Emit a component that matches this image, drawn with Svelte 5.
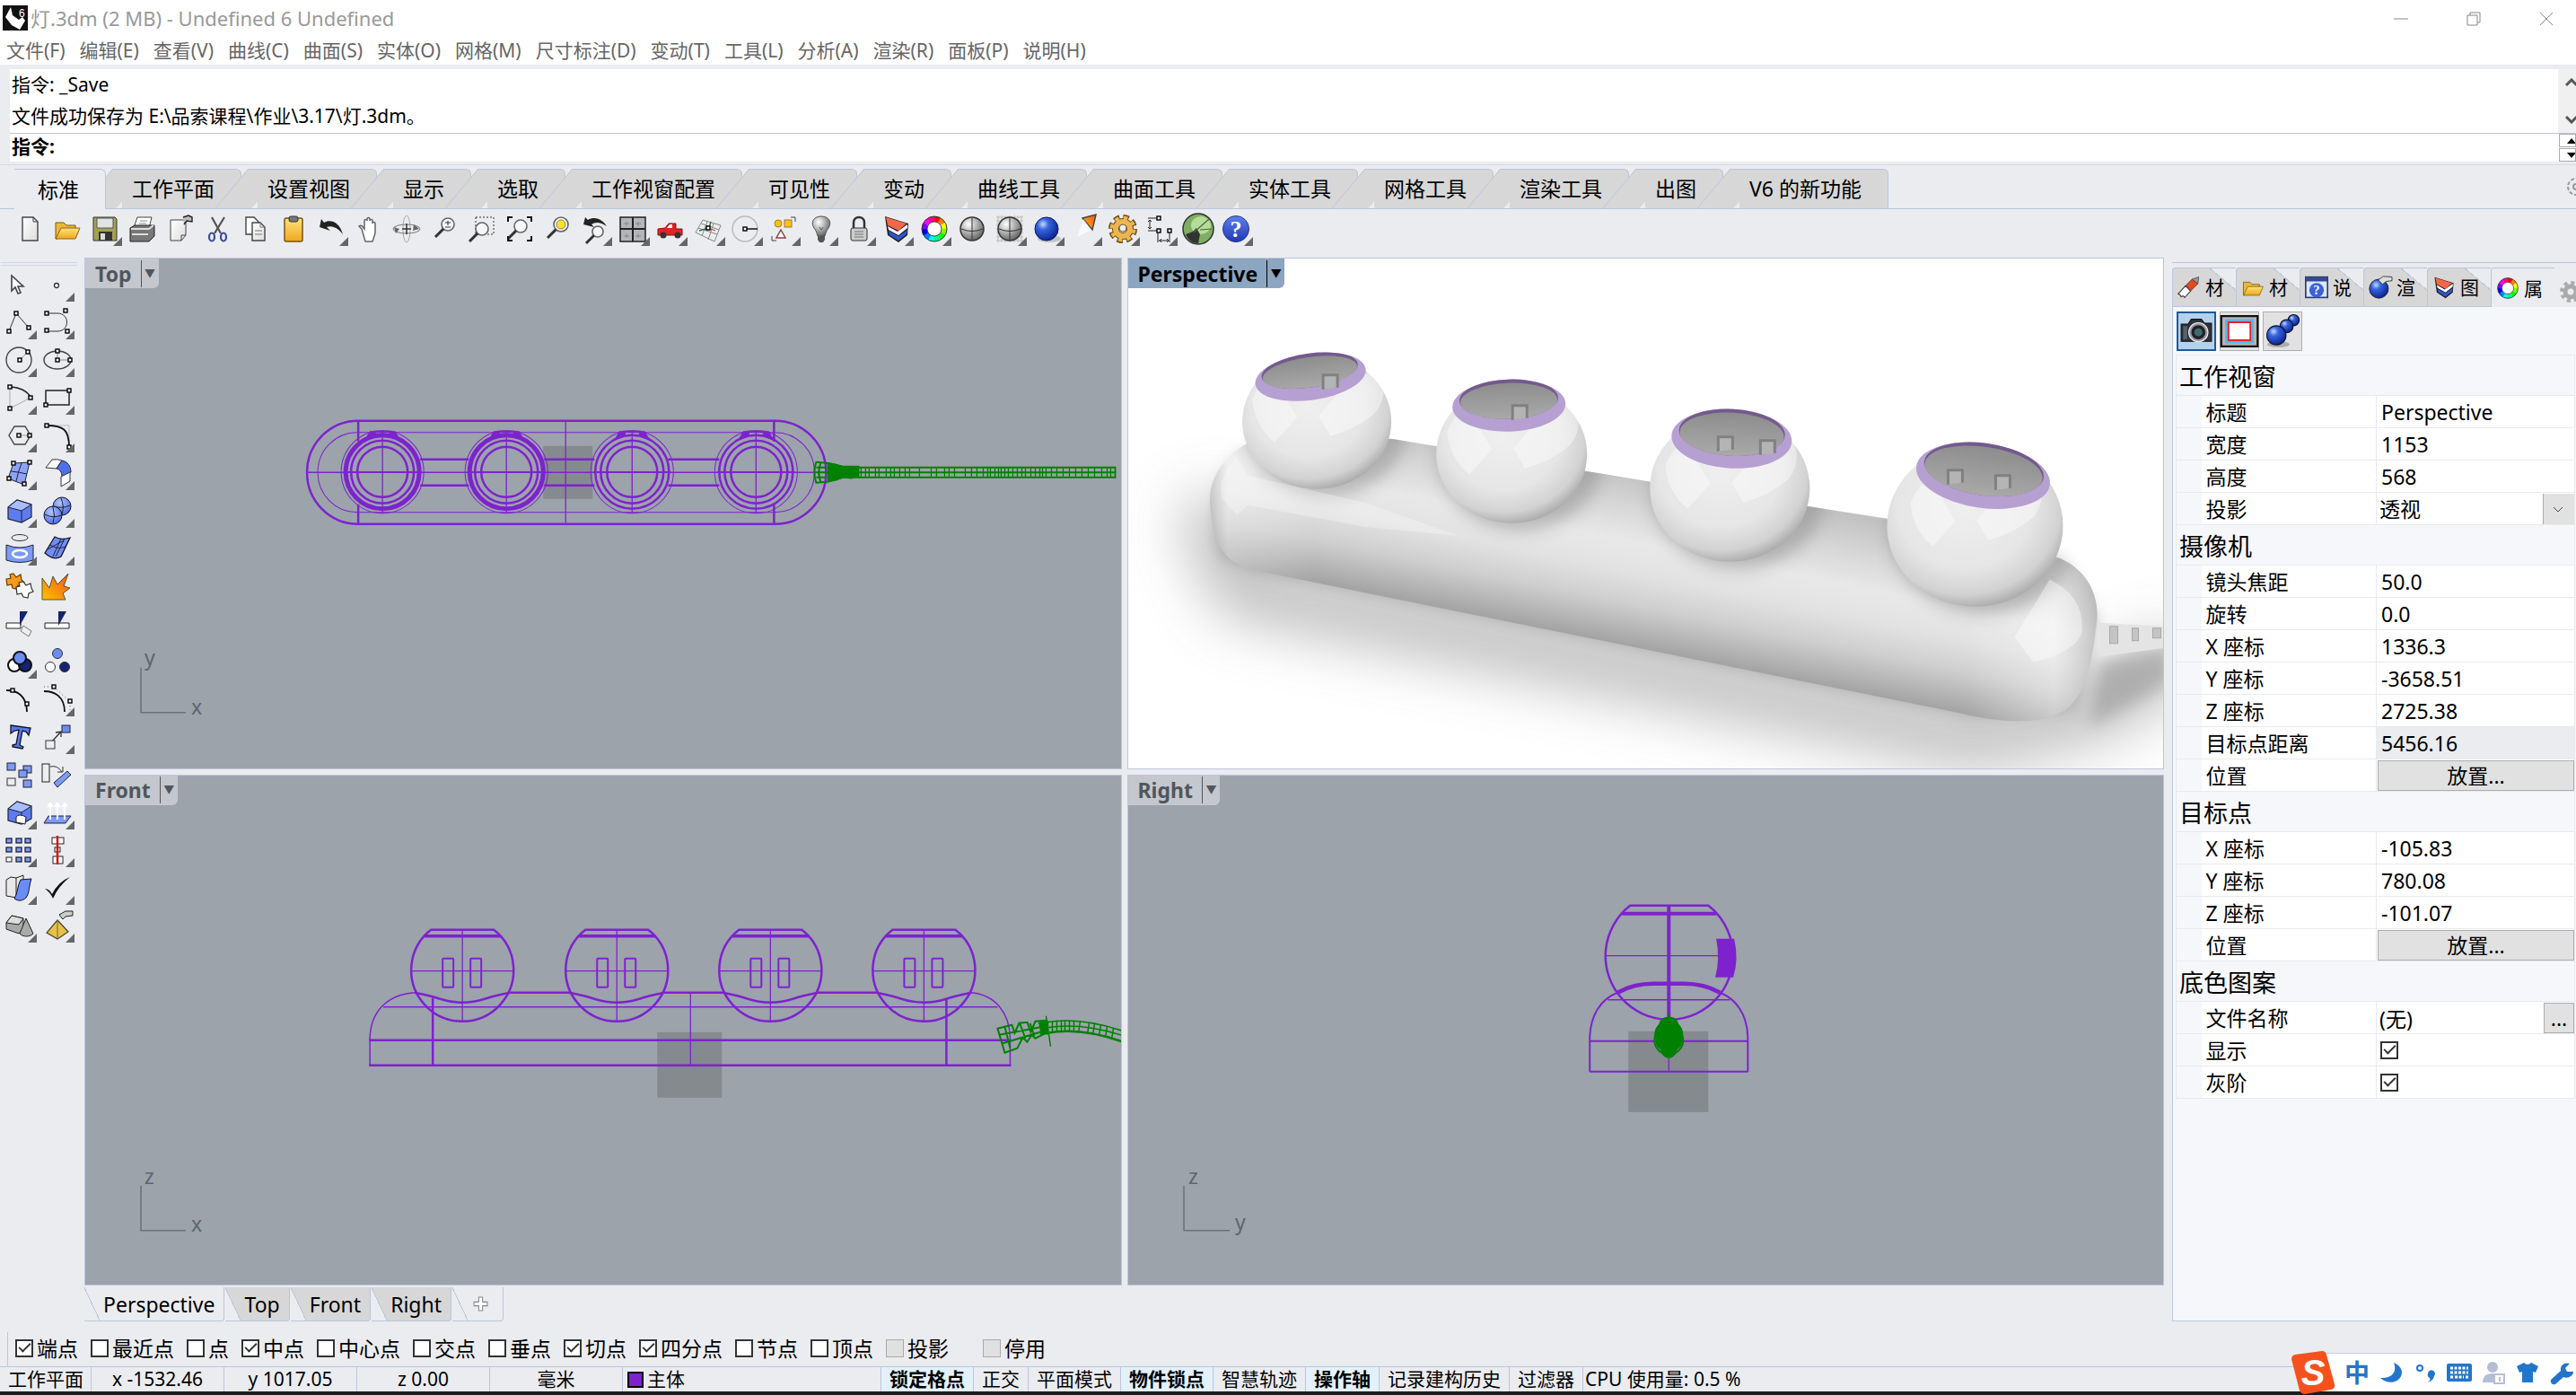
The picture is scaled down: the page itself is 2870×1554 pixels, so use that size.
<script>
  const menus = ['文件(F)', '编辑(E)', '查看(V)', '曲线(C)', '曲面(S)', '实体(O)', '网格(M)', '尺寸标注(D)', '变动(T)', '工具(L)', '分析(A)', '渲染(R)', '面板(P)', '说明(H)'];
  const tabs = ['标准', '工作平面', '设置视图', '显示', '选取', '工作视窗配置', '可见性', '变动', '曲线工具', '曲面工具', '实体工具', '网格工具', '渲染工具', '出图', 'V6 的新功能'];
  const viewTabs = ['Perspective', 'Top', 'Front', 'Right'];

  let activeTab = '标准';
  let activeView = 'Perspective';

  // control point handle
  const pt = (x, y) => `<rect x="${x - 2}" y="${y - 2}" width="4" height="4" fill="#fff" stroke="#000" stroke-width="1.4"/>`;

  const wheel = Array.from({ length: 12 }, (_, i) => {
    const a = (i * Math.PI) / 6 - 0.02;
    const b = a + Math.PI / 6 + 0.04;
    const p = (t) => `${(16 + 11 * Math.sin(t)).toFixed(2)} ${(16 - 11 * Math.cos(t)).toFixed(2)}`;
    return `<path d="M${p(a)}A11 11 0 0 1 ${p(b)}" fill="none" stroke="hsl(${i * 30},100%,50%)" stroke-width="6"/>`;
  }).join('') + '<circle cx="16" cy="16" r="14" fill="none" stroke="#333"/><circle cx="16" cy="16" r="8" fill="#fff" stroke="#444"/>';

  const lens = (x, y, r) => `<circle cx="${x}" cy="${y}" r="${r}" fill="#f6f6f8" stroke="#666" stroke-width="1.6"/><path d="M${x - r * 0.7} ${y + r * 0.7}L${x - r - 7} ${y + r + 7}" stroke="#333" stroke-width="3"/>`;
  const folder = '<path d="M3 9h9l3 3h10v4H9L5 27H3z" fill="#e9b93c" stroke="#7a5a10"/><path d="M3 27L9 15h21l-5 12z" fill="url(#yellow)" stroke="#8a6510"/>';
  const page = '<path d="M8 3h12l5 5v21H8z" fill="url(#paper)" stroke="#444" stroke-width="1.4"/><path d="M20 3v5h5" fill="none" stroke="#444"/>';
  const layers = '<path d="M3 2l16 5 10 3-1 13-10 8L6 23z" fill="#1c1c24"/><path d="M4 3l23 7-9 8L6 12z" fill="#f2674a"/><path d="M6 13l11 6 11-8v4l-10 8-11-6z" fill="#fff"/><path d="M7 18l11 6 10-7-1 5-9 7-10-6z" fill="#2f55c8"/>';
  const sphere = '<circle cx="16" cy="16" r="13" fill="url(#grey)" stroke="#333" stroke-width="1.5"/><path d="M16 4v24M4 16q12 5 24 0" stroke="#333" fill="none"/>';
  const ball = '<ellipse cx="18" cy="27" rx="13" ry="4" fill="#999" opacity=".5"/><circle cx="15" cy="16" r="13" fill="url(#blue)" stroke="#071a66"/>';
  const box = '<path d="M3 12l10-8 16 5v14l-11 6-15-4z" fill="#5c7cf0" stroke="#223" stroke-width="1.2"/><path d="M3 12l10-8 16 5-11 7z" fill="#a8bcff" stroke="#223"/><path d="M18 16v13" stroke="#223"/>';

  const toolbar = [
    [page],
    [folder],
    ['<path d="M3 3h24l2 2v24H3z" fill="#a3a152" stroke="#333"/><path d="M7 4h18v11H7z" fill="#dfe3e6" stroke="#555"/><path d="M9 19h15v10H9z" fill="#333"/><path d="M11 21h5v7h-5z" fill="#ddd"/>', 1],
    ['<path d="M10 3h16l-3 12H6z" fill="#fff" stroke="#444"/><path d="M2 15l5-3h22v12l-6 6H2z" fill="#777" stroke="#222"/><path d="M3 16h20l5-4M4 22h18" stroke="#ddd" fill="none" stroke-width="2"/><path d="M13 7h8M12 10h8" stroke="#888"/>'],
    ['<path d="M5 6h17v17l-5 6H5z" fill="url(#paper)" stroke="#444"/><path d="M22 23h-5v6" fill="none" stroke="#444"/><path d="M19 3l6-2 4 2v5l-6-1-3 4" fill="#bbb" stroke="#222" stroke-width="1.4"/>'],
    ['<path d="M9 3l10 18M23 3L12 21" stroke="#555" stroke-width="2.2"/><ellipse cx="9" cy="25" rx="3" ry="4.5" fill="none" stroke="#3a4a9a" stroke-width="2.2"/><ellipse cx="22" cy="25" rx="3" ry="4.5" fill="none" stroke="#3a4a9a" stroke-width="2.2"/>'],
    ['<path d="M5 3h9l5 5v14H5z" fill="#fff" stroke="#444" stroke-width="1.4"/><path d="M12 9h9l5 5v15H12z" fill="url(#paper)" stroke="#444" stroke-width="1.4"/><path d="M21 9v5h5M15 18h8M15 22h8" fill="none" stroke="#777"/>'],
    ['<rect x="6" y="4" width="20" height="26" rx="2" fill="url(#yellow)" stroke="#7a5410" stroke-width="1.5"/><rect x="11" y="2" width="10" height="6" rx="2" fill="#777" stroke="#333"/>'],
    ['<path d="M3 14l2-9 3 4C15 5 25 8 29 22 23 14 16 12 11 14l4 4z" fill="#222"/>', 1],
    ['<path d="M8 16L5 13c2-2 4 0 6 3V7c0-2 3-2 3 0V5c0-2 3-2 3 0v2c0-2 3-2 3 0v3c0-2 3-2 3 0v11l-3 9h-8z" fill="#fff" stroke="#666" stroke-width="1.5"/>'],
    ['<ellipse cx="16" cy="16" rx="4" ry="15" fill="none" stroke="#aaa"/><ellipse cx="16" cy="16" rx="15" ry="5" fill="none" stroke="#777"/><path d="M2 14l6 2-4 5M24 11l6 5-7 2" fill="#666"/><path d="M16 10v12M11 16h10" stroke="#333" stroke-width="1.5"/>'],
    [lens(20, 11, 7) + '<path d="M17 9h6M20 7v5M17 14h6" stroke="#333"/>'],
    ['<rect x="9" y="3" width="20" height="19" fill="none" stroke="#333" stroke-dasharray="2 2"/>' + lens(16, 16, 7)],
    [lens(17, 13, 7) + '<path d="M3 8V3h5M24 3h5v5M3 24v5h5M24 29h5v-5" fill="none" stroke="#111" stroke-width="2"/>'],
    [lens(20, 11, 8) + '<circle cx="20" cy="11" r="5" fill="#ffe020" stroke="#886"/>'],
    ['<path d="M3 11l2-8 3 3c8-5 17 0 21 7-7-5-13-5-17-2l3 3z" fill="#222"/>' + lens(19, 19, 6), 1],
    ['<rect x="2" y="3" width="28" height="27" fill="#b4b6ba" stroke="#222" stroke-width="1.5"/><path d="M16 3v27M2 16h28" stroke="#222" stroke-width="2"/><path d="M9 8v5M6 10h6M22 8v5M19 10h6M9 21v5M6 24h6M22 21v5M19 24h6" stroke="#888"/>', 1],
    ['<path d="M2 16l8-1 4-5h8v6h7v7H2z" fill="#e32222" stroke="#8a1010"/><path d="M12 15l3-4h3v4z" fill="#fff"/><circle cx="8" cy="23" r="3.5" fill="#333"/><circle cx="24" cy="23" r="3.5" fill="#333"/>', 1],
    ['<path d="M2 20l8-14 20 6-7 18zM5 15l21 7M8 10l20 7M15 8L9 24M22 10l-6 18" fill="none" stroke="#888"/><path d="M6 18l11-3 2-7" fill="none" stroke="#2a7a30" stroke-width="1.5"/><path d="M16 15l8 3" stroke="#c33"/>' + pt(16, 15), 1],
    ['<circle cx="15" cy="16" r="14" fill="none" stroke="#bbb" stroke-width="1.5"/><path d="M16 16h13" stroke="#111" stroke-width="1.5"/>' + pt(15, 16), 1],
    ['<path d="M3 24v5h5M24 3h5v5" fill="none" stroke="#444"/><circle cx="10" cy="10" r="4" fill="#ffc400" stroke="#975"/><rect x="17" y="6" width="8" height="8" fill="#ffc400" stroke="#975"/><path d="M13 17l5 9H8z" fill="#fff" stroke="#844" stroke-width="1.5"/>', 1],
    ['<path d="M16 2c9 0 12 7 8 13-3 4-3 6-4 9h-8c-1-3-1-5-4-9-4-6-1-13 8-13z" fill="url(#grey)" stroke="#555"/><path d="M12 24h8v4l-2 3h-4l-2-3z" fill="#555"/><path d="M14 14l2 3 2-3" stroke="#555" fill="none"/>', 1],
    ['<path d="M10 15V9c0-8 12-8 12 0v6" fill="none" stroke="#333" stroke-width="2.5"/><rect x="7" y="15" width="18" height="14" rx="2" fill="#ccc" stroke="#333"/><path d="M11 19h10M11 22h10M11 25h10" stroke="#777"/>', 1],
    [layers, 1],
    [wheel, 1],
    [sphere],
    ['<path d="M3 1v30M7 1v30M11 1v30M16 1v30M21 1v30M25 1v30M29 1v30M1 3h30M1 7h30M1 12h30M1 16h30M1 20h30M1 25h30M1 29h30" stroke="#bbb"/>' + sphere, 1],
    [ball, 1],
    ['<path d="M13 4l15-4-4 17z" fill="url(#orange)" stroke="#444" stroke-width="1.5"/><path d="M14 5l9 12-16 8z" fill="#fff" opacity=".7"/>', 1],
    ['<circle cx="16" cy="16" r="8" fill="none" stroke="#6b4a12" stroke-width="8"/><circle cx="16" cy="16" r="13" fill="none" stroke="#6b4a12" stroke-width="6" stroke-dasharray="6.2 4.01"/><circle cx="16" cy="16" r="8" fill="none" stroke="#ecb552" stroke-width="6"/><circle cx="16" cy="16" r="12" fill="none" stroke="#ecb552" stroke-width="5" stroke-dasharray="4.2 5.22" stroke-dashoffset="-.6"/><circle cx="16" cy="15" r="4" fill="#eee" stroke="#664"/>', 1],
    ['<path d="M2 4h10M2 18h10M4 6v10M2 8l2-2 2 2M2 14l2 2 2-2M13 20v11M26 20v11M14 29h11M17 27l-2 2 2 2M23 27l2 2-2 2" fill="none" stroke="#222"/>' + pt(14, 4) + pt(14, 18) + pt(26, 18), 1],
    ['<circle cx="16" cy="16" r="17" fill="#7fae62" stroke="#333" stroke-width="1.5"/><ellipse cx="19" cy="12" rx="11" ry="10" fill="#b5dc98"/><path d="M2 22l8-3 4-4 4 7-2 10C10 32 5 29 2 22z" fill="#333"/><path d="M11 20L28 5M18 17l13-1" stroke="#464" stroke-width="1.2"/>'],
    ['<circle cx="16" cy="16" r="14.500" fill="url(#help)" stroke="#22338a"/><text x="16" y="25" text-anchor="middle" font-family="Liberation Serif, serif" font-weight="bold" font-size="26" fill="#fff">?</text>', 1],
  ];

  const tools = [
    ['<path d="M7 6v17l4-4 3 7 3-1-3-7h6z" fill="#fff" stroke="#444" stroke-width="1.6"/>'],
    ['<circle cx="15" cy="17" r="2.5" fill="#fff" stroke="#333" stroke-width="1.3"/>', 1],
    ['<path d="M4 26L12 6l14 16" fill="none" stroke="#333"/>' + pt(4, 26) + pt(12, 6) + pt(26, 22), 1],
    ['<path d="M4 6h12c14 0 14 20 0 20H4" fill="none" stroke="#333"/>' + pt(4, 6) + pt(25, 3) + pt(4, 25) + pt(27, 26), 1],
    ['<circle cx="15" cy="16" r="14" fill="none" stroke="#444" stroke-width="1.4"/><path d="M16 16l9-9" stroke="#999"/>' + pt(16, 16) + pt(25, 7), 1],
    ['<ellipse cx="16" cy="16" rx="15" ry="10" fill="none" stroke="#444" stroke-width="1.4"/><path d="M16 16h14M16 16V6" stroke="#888"/>' + pt(16, 16) + pt(16, 6) + pt(30, 16), 1],
    ['<path d="M5 4c9 0 20 4 23 12L5 28z" fill="none" stroke="#aaa"/><path d="M5 4c9 0 20 4 23 12" fill="none" stroke="#222" stroke-width="1.5"/>' + pt(5, 4) + pt(28, 16) + pt(5, 28), 1],
    ['<path d="M3 8h26v16H3z" fill="none" stroke="#222" stroke-width="1.5"/>' + pt(29, 8) + pt(3, 24), 1],
    ['<path d="M10 6h12l6 10-6 10H10L4 16z" fill="none" stroke="#444" stroke-width="1.4"/><path d="M15 16h12" stroke="#999"/>' + pt(15, 16) + pt(27, 16), 1],
    ['<path d="M4 5h25v24" fill="none" stroke="#bbb"/><path d="M4 5c18 0 25 4 25 24" fill="none" stroke="#111" stroke-width="1.8"/>' + pt(4, 5) + pt(29, 29), 1],
    ['<path d="M9 5l18-1-6 25-18-7z" fill="#8ba4f8" stroke="#223"/><path d="M6 14q10 1 18 3M18 5q-4 10-6 20" fill="none" stroke="#223"/>' + pt(9, 5) + pt(27, 4) + pt(21, 28) + pt(4, 22), 1],
    ['<path d="M3 10l7-9q6-1 11 1l-6 9z" fill="#fff" stroke="#333"/><path d="M15 11l6-9c6 1 10 6 10 13l-10 5c0-5-2-8-6-9z" fill="#4e70e8" stroke="#223"/><path d="M20 20l10-5v10l-10 6z" fill="#fff" stroke="#333"/>', 1],
    [box, 1],
    ['<circle cx="21" cy="11" r="10" fill="url(#soft)" stroke="#112"/><circle cx="11" cy="21" r="10" fill="url(#soft)" stroke="#112"/><path d="M2 20q9 5 18 1M11 12q3 9 0 18M12 11q9 3 18-1M20 2q4 9 1 18" fill="none" stroke="#223"/>', 1],
    ['<ellipse cx="16" cy="4" rx="9" ry="3.5" fill="none" stroke="#333"/><path d="M1 12q15 6 30 0v17q-15 5-30 0z" fill="#7d9af5" stroke="#223"/><ellipse cx="16" cy="22" rx="8" ry="4" fill="none" stroke="#fff" stroke-width="2.5"/>', 1],
    ['<path d="M2 21L13 3c6 3 10 3 17 1L20 25c-7 4-12 1-18-4z" fill="#6f8df2" stroke="#112" stroke-width="1.3"/><path d="M8 12c6 4 11 4 17 2M20 5L11 25M24 5l-10 20M5 17l18-10" fill="none" stroke="#223"/>', 1],
    ['<path d="M1 8l5-1-1-4 4-1 3 4 5-3 1 6 3 3-4 4-3-1-2 4-4-1-1-4-5 1z" fill="#f79a1c" stroke="#6b3c00" stroke-width="1.2"/><path d="M12 17l4-1-1-4 5-1 3 4 5-2 1 5 2 4-5 2-1 5-5-1-2-4-5 1z" fill="#fff" stroke="#333" stroke-width="1.2"/>'],
    ['<path d="M-1 31V7l8 11 4-13 5 9L28 2l-5 14 7 2-8 6 3 7z" fill="url(#orange)" stroke="#552"/>'],
    ['<path d="M1 15h16v6H1z" fill="#fff" stroke="#222"/><path d="M16 2h9l-9 16z" fill="#14246e"/><path d="M20 18l9 6-3 6-9-6z" fill="#eee" stroke="#777"/>'],
    ['<path d="M2 15h27v6H2z" fill="#fff" stroke="#222"/><path d="M17 2h9l-9 16z" fill="#14246e"/>'],
    ['<circle cx="10" cy="20" r="7" fill="#fff" stroke="#111" stroke-width="2"/><circle cx="22" cy="20" r="7" fill="#14246e" stroke="#111" stroke-width="2"/><circle cx="16" cy="12" r="7" fill="#6c8cf5" stroke="#111" stroke-width="2"/>', 1],
    ['<circle cx="16" cy="7" r="5.5" fill="#6c8cf5" stroke="#333"/><circle cx="8" cy="22" r="5.5" fill="#fff" stroke="#333"/><circle cx="24" cy="22" r="5.5" fill="#14246e" stroke="#333"/>'],
    ['<path d="M1 6c12 0 23 6 23 24" fill="none" stroke="#111" stroke-width="1.8"/>' + pt(8, 6) + pt(24, 21)],
    ['<path d="M1 7c12 0 23 6 23 23" fill="none" stroke="#111" stroke-width="1.8"/><path d="M1 2h11l18 17v9" fill="none" stroke="#555" stroke-dasharray="1 3"/>' + pt(12, 2) + pt(30, 18), 1],
    ['<path d="M6 3l22 3-2 8-3-4-4-1-3 16 4 2-1 2-11-2v-2l4-1 3-16-5 1-4 3z" fill="#5878ea" stroke="#112" stroke-width="1.3"/>'],
    ['<path d="M9 22L20 10M14 11l6-1v6" fill="none" stroke="#333" stroke-width="1.3"/><rect x="21" y="3" width="9" height="8" fill="#6c8cf5" stroke="#223"/><rect x="3" y="20" width="10" height="9" fill="#eee" stroke="#333"/>', 1],
    ['<g fill="#7d9af5" stroke="#223"><rect x="2" y="3" width="9" height="8"/><rect x="20" y="6" width="9" height="8"/><rect x="15" y="11" width="9" height="8"/><rect x="20" y="22" width="9" height="8"/></g><rect x="2" y="20" width="9" height="8" fill="#eee" stroke="#333"/>'],
    ['<rect x="-1" y="4" width="8" height="20" fill="#eee" stroke="#222"/><path d="M8 7q8-2 13 6M22 7v6h-6" fill="none" stroke="#333"/><path d="M12 25l15-13 4 4-15 14z" fill="#7d9af5" stroke="#223"/>'],
    [box + '<path d="M12 21q3-4 11 0l-1 8-10-2z" fill="#fff" stroke="#222"/>', 1],
    ['<path d="M6 20h25l-6 8H1z" fill="#7d9af5" stroke="#223"/><path d="M8 24V7M16 24V7M24 24V7M5 10l3-4 3 4M13 10l3-4 3 4M21 10l3-4 3 4" fill="none" stroke="#fff" stroke-width="2"/>', 1],
    ['<g fill="#7d9af5" stroke="#223" stroke-width="1.3"><rect x="1" y="3" width="6" height="5"/><rect x="12" y="3" width="6" height="5"/><rect x="22" y="3" width="6" height="5"/><rect x="1" y="13" width="6" height="5"/><rect x="12" y="13" width="6" height="5"/><rect x="22" y="13" width="6" height="5"/><rect x="12" y="24" width="6" height="5"/><rect x="22" y="24" width="6" height="5"/></g><rect x="1" y="24" width="6" height="5" fill="#fff" stroke="#222"/>', 1],
    ['<rect x="10" y="2" width="13" height="7" fill="#fff" stroke="#222"/><rect x="13" y="13" width="6" height="5" fill="#fff" stroke="#222"/><rect x="11" y="23" width="11" height="8" fill="#fff" stroke="#222"/><path d="M16 0v32" stroke="#d01818" stroke-width="2.5"/>', 1],
    ['<path d="M1 7l5-3 6 1 8-3v20l-7 5-12-2z" fill="#e8e8e8" stroke="#222"/><path d="M12 5v19" stroke="#222"/><path d="M10 28c4-6 3-14 7-21l12-1c-3 8-2 16-6 21-4 4-9 4-13 1z" fill="#6c8cf5" stroke="#112"/>', 1],
    ['<path d="M2 17q5 0 8 6Q17 9 30 4 17 14 11 28q-3-7-9-11z" fill="#111"/>', 1],
    ['<path d="M1 13l6-8 13 3v11l-5 6-14-5z" fill="#aaa" stroke="#222"/><path d="M1 13l6-8 13 3-5 7z" fill="#ddd" stroke="#222"/><path d="M23 8l8 17c-3 4-12 4-15 0z" fill="#aaa" stroke="#222"/>', 1],
    ['<path d="M16 10l12 13-12 8L4 24z" fill="#e9c147" stroke="#443" stroke-width="1.2"/><path d="M16 10v20" stroke="#664"/><path d="M18 4l7-4h8v5l-8 1-3 3z" fill="#ccc" stroke="#222"/>', 1],
  ];

  const panelTabs = [
    ['材', '<path d="M1 25l10-11 7 7-8 9q-2-3-5-1-1-3-4-4z" fill="#fff" stroke="#444" stroke-width="1.5"/><path d="M12 13l8-8 8 6-10 10z" fill="#e04c1c" stroke="#722"/><path d="M20 5l9-3-1 9z" fill="#999" stroke="#444"/>'],
    ['材', folder],
    ['说', '<rect x="1" y="2" width="30" height="28" fill="#dfe6ff" stroke="#223a7a" stroke-width="2"/><path d="M1 2h30v6H1z" fill="#334a8c"/><circle cx="16" cy="20" r="10" fill="#3c62d8"/><text x="16" y="26" text-anchor="middle" font-size="18" font-weight="bold" fill="#fff" font-family="Liberation Serif, serif">?</text>'],
    ['渲', '<circle cx="14" cy="18" r="13" fill="url(#blue)" stroke="#111"/><path d="M13 6l7-5 12 1v5l-8 1-5 4z" fill="#ddd" stroke="#222"/>'],
    ['图', layers],
    ['属', wheel],
  ];

  const modes = [
    '<path d="M1 9h7l3-5h10l3 4h7v18H1z" fill="#2c3238" stroke="#111"/><circle cx="18" cy="17" r="9.5" fill="#99a" stroke="#eee"/><circle cx="18" cy="17" r="7" fill="#222"/><circle cx="18" cy="17" r="4" fill="#3e6a70"/><path d="M3 11h4v13H3z" fill="#596068"/>',
    '<rect x="-2" y="1" width="36" height="30" fill="#b4b4b4" stroke="#111" stroke-width="2"/><rect x="3" y="5" width="26" height="22" fill="#fff" stroke="#4db8f0" stroke-width="2"/><rect x="5" y="7" width="22" height="18" fill="#fff" stroke="#ea2222" stroke-width="2"/>',
    '<ellipse cx="12" cy="29" rx="11" ry="3" fill="#777" opacity=".5"/><circle cx="27" cy="5" r="5.5" fill="url(#blue)" stroke="#112"/><circle cx="20" cy="11" r="6.5" fill="url(#blue)" stroke="#112"/><circle cx="10" cy="20" r="9.5" fill="url(#blue)" stroke="#112"/>',
  ];

  const groups = [
    { title: '工作视窗', rows: [
      { label: '标题', value: 'Perspective' },
      { label: '宽度', value: '1153' },
      { label: '高度', value: '568' },
      { label: '投影', value: '透视', kind: 'select' },
    ] },
    { title: '摄像机', rows: [
      { label: '镜头焦距', value: '50.0' },
      { label: '旋转', value: '0.0' },
      { label: 'X 座标', value: '1336.3' },
      { label: 'Y 座标', value: '-3658.51' },
      { label: 'Z 座标', value: '2725.38' },
      { label: '目标点距离', value: '5456.16', kind: 'readonly' },
      { label: '位置', value: '放置...', kind: 'button' },
    ] },
    { title: '目标点', rows: [
      { label: 'X 座标', value: '-105.83' },
      { label: 'Y 座标', value: '780.08' },
      { label: 'Z 座标', value: '-101.07' },
      { label: '位置', value: '放置...', kind: 'button' },
    ] },
    { title: '底色图案', rows: [
      { label: '文件名称', value: '(无)', kind: 'file' },
      { label: '显示', value: true, kind: 'check' },
      { label: '灰阶', value: true, kind: 'check' },
    ] },
  ];

  const snaps = [
    { name: '端点', on: true },
    { name: '最近点' },
    { name: '点' },
    { name: '中点', on: true },
    { name: '中心点' },
    { name: '交点' },
    { name: '垂点' },
    { name: '切点', on: true },
    { name: '四分点', on: true },
    { name: '节点' },
    { name: '顶点' },
    { name: '投影', disabled: true },
    { name: '停用', disabled: true, apart: true },
  ];

  const toggles = [
    { name: '锁定格点', on: true },
    { name: '正交' },
    { name: '平面模式' },
    { name: '物件锁点', on: true },
    { name: '智慧轨迹' },
    { name: '操作轴', on: true },
    { name: '记录建构历史' },
    { name: '过滤器' },
  ];

  // lamp shades of the rendered view
  const shades = [
    { x: 1467, y: 470, rx: 83, ry: 75, rimX: 1460, rimY: 420, rw: 62, rh: 26, tilt: -8, holes: [[22, 0]] },
    { x: 1684, y: 506, rx: 84, ry: 77, rimX: 1681, rimY: 452, rw: 63, rh: 29, tilt: -2, holes: [[12, 2]] },
    { x: 1927, y: 544, rx: 89, ry: 82, rimX: 1929, rimY: 489, rw: 67, rh: 33, tilt: 3, holes: [[-7, 0], [40, 4]] },
    { x: 2200, y: 586, rx: 98, ry: 90, rimX: 2209, rimY: 530, rw: 75, rh: 36, tilt: 8, holes: [[-31, -4], [22, 2]] },
  ];

  const topRings = [427, 565, 705, 843];
  const frontLamps = [516, 688, 859, 1030];
  const cableTicks = [960, 965, 969, 976, 980, 988, 993, 997, 1003, 1009, 1014, 1025, 1038, 1044, 1053, 1058, 1064, 1076, 1083, 1089, 1096, 1101, 1104, 1109, 1113, 1116, 1120, 1124, 1129, 1134, 1139, 1143, 1149, 1154, 1159, 1162, 1166, 1172, 1178, 1185, 1192, 1199, 1206, 1213, 1220, 1228, 1234, 1238];
</script>

<svg class="defs" aria-hidden="true">
  <defs>
    <radialGradient id="blue" cx=".35" cy=".3" r=".8"><stop offset="0" stop-color="#c8d8ff" /><stop offset=".3" stop-color="#3565e0" /><stop offset="1" stop-color="#061a80" /></radialGradient>
    <radialGradient id="soft" cx=".4" cy=".3" r=".8"><stop offset="0" stop-color="#b4c6ff" /><stop offset="1" stop-color="#3f60dc" /></radialGradient>
    <radialGradient id="grey" cx=".35" cy=".3" r=".8"><stop offset="0" stop-color="#fff" /><stop offset="1" stop-color="#555" /></radialGradient>
    <linearGradient id="paper" x2="1" y2="1"><stop offset="0" stop-color="#fff" /><stop offset="1" stop-color="#ddd" /></linearGradient>
    <linearGradient id="yellow" y2="1" x2="0"><stop offset="0" stop-color="#ffe27a" /><stop offset="1" stop-color="#eda81e" /></linearGradient>
    <linearGradient id="orange" y1="1" y2="0" x2="1"><stop offset="0" stop-color="#ffc400" /><stop offset="1" stop-color="#f0501e" /></linearGradient>
    <linearGradient id="help" x2="0" y2="1"><stop offset="0" stop-color="#5c80f0" /><stop offset="1" stop-color="#2238b0" /></linearGradient>
  </defs>
</svg>

<main class="app">
  <header class="titlebar">
    <svg class="logo" viewBox="0 0 28 28"><rect width="28" height="28" fill="#111" /><path d="M3 13L9 2l2 9 7 5 4-3 3 4-6 10-9-5z" fill="#fff" /><text x="18" y="13" font-family="Liberation Sans, sans-serif" font-size="12" fill="#fff">6</text></svg>
    <h1>灯.3dm (2 MB) - Undefined 6 Undefined</h1>
    <div class="window-buttons">
      <button aria-label="Minimize"><svg viewBox="0 0 16 16"><path d="M0 8h16" /></svg></button>
      <button aria-label="Restore"><svg viewBox="0 0 16 16"><path d="M1 4h11v11H1zM4 4V1h11v11h-3" /></svg></button>
      <button aria-label="Close"><svg viewBox="0 0 16 16"><path d="M1 1l14 14M15 1L1 15" /></svg></button>
    </div>
  </header>

  <nav class="menu">
    {#each menus as item}
      <button>{item}</button>
    {/each}
  </nav>

  <section class="command">
    <div class="history">
      <div class="lines">
        <p>指令: _Save</p>
        <p>文件成功保存为 E:\品索课程\作业\3.17\灯.3dm。</p>
      </div>
      <div class="scroll">
        <svg viewBox="0 0 14 10"><path d="M1 8l6-6 6 6" /></svg>
        <svg viewBox="0 0 14 10"><path d="M1 2l6 6 6-6" /></svg>
      </div>
    </div>
    <div class="prompt">
      <label for="command">指令:</label>
      <input id="command" type="text" />
      <div class="spin">
        <button aria-label="Previous"><svg viewBox="0 0 10 6"><path d="M0 6l5-6 5 6z" /></svg></button>
        <button aria-label="Next"><svg viewBox="0 0 10 6"><path d="M0 0l5 6 5-6z" /></svg></button>
      </div>
    </div>
  </section>

  <nav class="tabs">
    {#each tabs as tab}
      <button class:active={tab === activeTab} on:click={() => (activeTab = tab)}><span>{tab}</span></button>
    {/each}
    <svg class="gear" viewBox="0 0 24 24"><circle cx="12" cy="12" r="9" fill="none" stroke="#999" stroke-width="2" stroke-dasharray="4 2" /><circle cx="12" cy="12" r="3" fill="none" stroke="#999" stroke-width="2" /></svg>
  </nav>

  <div class="toolbar">
    {#each toolbar as [art, more], i}
      <button class="tool" class:more aria-label="Tool {i + 1}"><svg viewBox="0 0 32 32">{@html art}</svg></button>
    {/each}
  </div>

  <div class="workspace">
    <aside class="tools">
      <div class="grip"></div>
      <div class="tool-grid">
        {#each tools as [art, more], i}
          <button class="tool" class:more aria-label="Draw tool {i + 1}"><svg viewBox="0 0 32 32">{@html art}</svg></button>
        {/each}
      </div>
    </aside>

    <div class="center">
      <div class="viewports">
        <section class="viewport">
          <svg class="scene" viewBox="96 288 1153 568" preserveAspectRatio="xMidYMid slice">
            <rect x="606" y="497" width="55" height="59" fill="#858a8f" />
            <g fill="none" stroke="#7e22ce">
              <rect x="343" y="469" width="578" height="115" rx="57" stroke-width="2.5" />
              <rect x="355" y="482" width="553" height="89" rx="44" />
              <path d="M400 469v23M400 562v22M863 469v23M863 562v22" stroke-width="2.5" />
              <path d="M631 469v115M342 526.5h579" stroke-width="1.3" />
              <path d="M469 512h54M469 541h54M607 512h56M607 541h56M745 512h57M745 541h57" stroke-width="2.5" />
              {#each topRings as x, i}
                <circle cx={x} cy="526" r="46" />
                <circle cx={x} cy="526" r="41" stroke-width={i < 2 ? 5 : 2.5} />
                <circle cx={x} cy="526" r="35" stroke-width="2.5" />
                <circle cx={x} cy="526" r="28" stroke-width="2.5" />
                <path d="M{x} 480v92M{x - 43} 526h86" stroke-width="1.3" />
                <path d="M{x - 18} 488l4-7h6v5l-10 4zM{x + 18} 488l-4-7h-6v5l10 4z" fill="#7e22ce" />
                <path d="M{x - 10} 481h20" stroke-width="2" />
              {/each}
            </g>
            <g stroke="green" fill="none" stroke-width="1.3">
              <path d="M910 515l12 1 18 4h17v12h-17l-18 5-12 1q-4-12 0-23zM915 516q-4 11 0 21" stroke-width="2" />
              <path d="M923 516l10 2 7 3 9-1 8 2v9l-8 2-9-1-7 3-10 2z" fill="green" />
              <path d="M957 521h286v11h-286M908 526.5h335M910 521h12M910 532h12" stroke-width="1.8" />
              {#each cableTicks as x}
                <path d="M{x} 521v11" />
              {/each}
            </g>
            <path class="axis" d="M158 744v50h50" />
            <text class="axis-name" x="162" y="741">y</text>
            <text class="axis-name" x="214" y="796">x</text>
          </svg>
          <h2><span>Top</span><button aria-label="Top menu">▼</button></h2>
        </section>

        <section class="viewport rendered">
          <svg class="scene" viewBox="1257 288 1153 568" preserveAspectRatio="xMidYMid slice">
            <defs>
              <linearGradient id="side" gradientUnits="userSpaceOnUse" x1="1839" y1="530" x2="1801" y2="716"><stop offset="0" stop-color="#c2c2c2" /><stop offset=".22" stop-color="#d8d8d8" /><stop offset=".4" stop-color="#e8e8e8" /><stop offset=".58" stop-color="#e2e2e2" /><stop offset=".76" stop-color="#cfcfcf" /><stop offset="1" stop-color="#a4a4a4" /></linearGradient>
              <linearGradient id="ends" gradientUnits="userSpaceOnUse" x1="1348" y1="0" x2="2337" y2="0"><stop offset="0" stop-color="#aaa" stop-opacity=".45" /><stop offset=".02" stop-color="#fff" stop-opacity=".35" /><stop offset=".12" stop-color="#fff" stop-opacity="0" /><stop offset=".85" stop-color="#fff" stop-opacity="0" /><stop offset=".95" stop-color="#fff" stop-opacity=".3" /><stop offset="1" stop-color="#999" stop-opacity=".5" /></linearGradient>
              <radialGradient id="shade" cx=".44" cy=".38" r=".64"><stop offset="0" stop-color="#efefef" /><stop offset=".6" stop-color="#e6e6e6" /><stop offset=".85" stop-color="#d2d2d2" /><stop offset="1" stop-color="#a8a8a8" /></radialGradient>
              <linearGradient id="inside" x2="0" y2="1"><stop offset="0" stop-color="#8d8d8d" /><stop offset="1" stop-color="#a9a9a9" /></linearGradient>
              <filter id="ground" x="-30%" y="-40%" width="160%" height="180%"><feGaussianBlur stdDeviation="34" /></filter>
              <filter id="contact" x="-20%" y="-20%" width="140%" height="140%"><feGaussianBlur stdDeviation="9" /></filter>
              <clipPath id="body-clip"><path id="body" d="M1388 495C1360 512 1347 535 1348 560C1351 605 1362 626 1395 635L2185 795C2235 808 2285 806 2306 787C2328 762 2330 735 2336 690C2338 655 2318 632 2294 622L2102 578L1839 537L1550 489Z" /></clipPath>
            </defs>
            <path d="M1340 560L1385 655 2200 822 2330 790 2430 730" fill="none" stroke="#999" stroke-width="60" filter="url(#ground)" opacity=".75" />
            <path d="M1388 505C1350 530 1350 600 1362 622L1398 636 2200 799 2310 790 2335 690 2294 622" fill="#999" filter="url(#contact)" opacity=".7" />
            <path d="M2338 740l80-20v40l-90 50z" fill="#999" filter="url(#contact)" opacity=".6" />
            <path d="M2338 694l73 4v24l-73 10z" fill="#e4e4e4" />
            <path d="M2350 698h9v19h-9zM2375 700h7v14h-7zM2398 700h9v11h-9z" fill="#c4c4c4" stroke="#a8a8a8" />
            <use href="#body" fill="url(#side)" />
            <use href="#body" fill="url(#ends)" />
            <g clip-path="url(#body-clip)">
              {#each shades as s}
                <ellipse cx={s.x + 10} cy={s.y + 3} rx={s.rx + 8} ry={s.ry + 5} fill="#888" opacity=".5" filter="url(#contact)" />
              {/each}
            </g>
            <path d="M1378 510q-24 24-16 46l16 18 12-11 130 24 105 10-105-37-130-30z" fill="#fff" opacity=".28" />
            <path d="M2283 646q40 18 36 60-10 22-54 32l-21-28z" fill="#fff" opacity=".4" />
            {#each shades as s}
              <ellipse cx={s.x} cy={s.y} rx={s.rx} ry={s.ry} fill="url(#shade)" />
              <path d="M{s.x - 72} {s.y - 25}q10-22 22-28l28 48-25 28q-22-18-25-48z" fill="#fff" opacity=".4" />
              <path d="M{s.x + 2} {s.y - 6}l28-34 38-20q14 30-3 50-20 18-50 26z" fill="#fff" opacity=".4" />
              <g transform="rotate({s.tilt} {s.rimX} {s.rimY})">
                <ellipse cx={s.rimX} cy={s.rimY} rx={s.rw} ry={s.rh} fill="#b69fd1" />
                <ellipse cx={s.rimX} cy={s.rimY - 7} rx={s.rw - 8} ry={s.rh - 7} fill="#735a8c" />
                <ellipse cx={s.rimX} cy={s.rimY - 5} rx={s.rw - 9} ry={s.rh - 9} fill="url(#inside)" />
              </g>
              {#each s.holes as [dx, dy]}
                <path d="M{s.rimX + dx - 8} {s.rimY + dy + 14}v-16h16v14" fill="#b4b4b4" stroke="#808080" stroke-width="3" />
              {/each}
            {/each}
          </svg>
          <h2 class="current"><span>Perspective</span><button aria-label="Perspective menu">▼</button></h2>
        </section>

        <section class="viewport">
          <svg class="scene" viewBox="96 864 1153 568" preserveAspectRatio="xMidYMid slice">
            <rect x="733" y="1150" width="72" height="73" fill="#858a8f" />
            <g fill="none" stroke="#7e22ce">
              <path d="M413 1187v-31c1-28 18-48 51-50M1126 1187v-31c-1-28-17-48-44-50" stroke-width="1.5" />
              <path d="M428 1122h684M770 1107v80" stroke-width="1.3" />
              <path d="M412 1159h715M412 1187h715M569 1106h67M740 1106h68M911 1106h68M483 1112v75M1055 1112v75" stroke-width="2.5" />
              {#each frontLamps as x}
                <path d="M{x - 35} 1036h70a57 57 0 1 1 -70 0z" stroke-width="2.5" />
                <path d="M{x - 43} 1043h86" stroke-width="3.5" />
                <path d="M{x} 1036v103M{x - 57} 1082h114" stroke-width="1.3" />
                <rect x={x - 22} y="1068" width="12" height="32" rx="1" stroke-width="2" />
                <rect x={x + 9} y="1068" width="12" height="32" rx="1" stroke-width="2" />
                <path d="M{x - 53} 1106q20 4 28 7 25 8 50 0 8-3 28-7" stroke-width="2.5" />
              {/each}
            </g>
            <g stroke="green" fill="none" stroke-width="1.5">
              <path d="M1112 1146l16-4 3 9 5-11 9-1 4 11 5-12 12-1v14l-12 6-4-4-5 8-5-5-6 12-14 5zM1114 1153l54-10M1116 1163l50-15M1120 1144l6 24M1137 1141l6 16M1148 1140l5 14M1158 1138l4 14" stroke-width="2" />
              <path d="M1160 1138h8v14h-8z" fill="green" />
              <path d="M1166 1132l5 34" />
              <path d="M1167 1139q38-6 85 10M1167 1145q38-6 85 9" />
              <path d="M1167 1151q38-7 85 10" stroke-width="2.5" />
              <path d="M1173 1138v12M1178 1137v12M1183 1137v12M1187 1137v12M1192 1137v12M1197 1137v12M1204 1138l-2 13M1214 1140l-2 12M1220 1141l-2 12M1227 1142l-2 12M1234 1144l-2 12M1241 1146l-2 12" />
            </g>
            <path class="axis" d="M158 1321v50h50" />
            <text class="axis-name" x="162" y="1319">z</text>
            <text class="axis-name" x="214" y="1372">x</text>
          </svg>
          <h2><span>Front</span><button aria-label="Front menu">▼</button></h2>
        </section>

        <section class="viewport">
          <svg class="scene" viewBox="1257 864 1153 568" preserveAspectRatio="xMidYMid slice">
            <rect x="1814" y="1149" width="89" height="90" fill="#858a8f" />
            <g fill="none" stroke="#7e22ce" stroke-width="2">
              <path d="M1816 1009h87a71 71 0 1 1 -87 0z" stroke-width="2.5" />
              <path d="M1807 1018h105M1859 1009v126" stroke-width="4" />
              <path d="M1788 1065h126M1791 1114h136M1859 1135v59" stroke-width="1.3" />
              <path d="M1771 1194v-39c1-25 13-42 31-49M1947 1194v-39c-1-25-13-42-31-49M1771 1160h176M1771 1194h176" />
              <path d="M1802 1106c14-8 27-10 40-10h34c13 0 26 2 40 10" stroke-width="4.5" />
              <path d="M1913 1047h18q5 22-1 41h-18q5-20 1-41z" fill="#7e22ce" />
            </g>
            <circle cx="1859" cy="1159" r="16" fill="none" stroke="green" stroke-width="2" />
            <path d="M1859 1128l1 5c6 0 9 4 10 8 5 5 6 11 4 17 0 6-2 9-6 12-1 6-5 9-9 9s-8-3-9-9c-4-3-6-6-6-12-2-6-1-12 4-17 1-4 4-8 10-8z" fill="green" />
            <path class="axis" d="M1319 1321v50h51" />
            <text class="axis-name" x="1324" y="1319">z</text>
            <text class="axis-name" x="1376" y="1370">y</text>
          </svg>
          <h2><span>Right</span><button aria-label="Right menu">▼</button></h2>
        </section>
      </div>

      <nav class="view-tabs">
        {#each viewTabs as view}
          <button class:active={view === activeView} on:click={() => (activeView = view)}>{view}</button>
        {/each}
        <button class="active add" aria-label="New viewport"><svg viewBox="0 0 16 16"><path d="M6 1h4v5h5v4h-5v5H6v-5H1V6h5z" /></svg></button>
      </nav>
    </div>

    <aside class="panel">
      <nav class="panel-tabs">
        {#each panelTabs as [name, art], i}
          <button class:active={i === 5}><svg viewBox="0 0 32 32">{@html art}</svg>{name}</button>
        {/each}
        <svg class="panel-gear" viewBox="0 0 24 24"><circle cx="12" cy="12" r="6" fill="none" stroke="#aaa" stroke-width="5" /><circle cx="12" cy="12" r="10" fill="none" stroke="#aaa" stroke-width="4" stroke-dasharray="4 3.85" /></svg>
      </nav>
      <div class="panel-body">
        <div class="modes">
          {#each modes as art, i}
            <button class:active={i === 0} aria-label="Page {i + 1}"><svg viewBox="0 0 32 32">{@html art}</svg></button>
          {/each}
        </div>
        <table>
          <colgroup><col class="indent" /><col class="name" /><col /></colgroup>
          {#each groups as group, g}
            <tbody>
              <tr><th colspan="3">{group.title}</th></tr>
              {#each group.rows as row, r}
                <tr>
                  <td class="indent"></td>
                  <td class="name"><label for="p{g}-{r}">{row.label}</label></td>
                  <td class="value {row.kind ?? ''}">
                    {#if row.kind === 'select'}
                      <div class="field">
                        <select id="p{g}-{r}"><option>{row.value}</option></select>
                        <svg viewBox="0 0 12 8"><path d="M1 1l5 5 5-5" /></svg>
                      </div>
                    {:else if row.kind === 'button'}
                      <button id="p{g}-{r}">{row.value}</button>
                    {:else if row.kind === 'file'}
                      <div class="field">
                        <input id="p{g}-{r}" type="text" value={row.value} />
                        <button aria-label="Browse">...</button>
                      </div>
                    {:else if row.kind === 'check'}
                      <input id="p{g}-{r}" type="checkbox" checked={row.value} />
                    {:else}
                      <input id="p{g}-{r}" type="text" value={row.value} readonly={row.kind === 'readonly'} />
                    {/if}
                  </td>
                </tr>
              {/each}
            </tbody>
          {/each}
        </table>
      </div>
    </aside>
  </div>

  <div class="osnap">
    {#each snaps as snap}
      <label class:apart={snap.apart}><input type="checkbox" checked={snap.on} disabled={snap.disabled} />{snap.name}</label>
    {/each}
  </div>

  <footer class="status">
    <span class="cell plane">工作平面</span>
    <span class="cell coord">x -1532.46</span>
    <span class="cell coord">y 1017.05</span>
    <span class="cell coord">z 0.00</span>
    <span class="cell coord">毫米</span>
    <span class="cell layer"><i></i>主体</span>
    {#each toggles as toggle}
      <button class="cell" class:on={toggle.on}>{toggle.name}</button>
    {/each}
    <span class="cpu">CPU 使用量: 0.5 %</span>
  </footer>
  <div class="taskbar"></div>

  <div class="ime">
    <svg class="sogou" viewBox="0 0 50 48"><path d="M1 9q0-4 4-5L35 0q4 0 5 4l9 33q1 5-4 6l-29 5q-4 0-6-4z" fill="#f4511e" /><text x="25" y="38" text-anchor="middle" font-family="Liberation Sans, sans-serif" font-weight="bold" font-style="italic" font-size="40" fill="#fff">S</text></svg>
    <b>中</b>
    <svg viewBox="0 0 28 28"><path d="M17 3c4 10-2 18-15 17 8 8 23 6 24-6 0-5-4-9-9-11z" /></svg>
    <svg viewBox="0 0 28 28"><circle cx="8" cy="9" r="3" fill="none" stroke="#2176cc" stroke-width="2" /><path d="M17 15a4 4 0 1 1 7 3c-1 4-4 6-7 7 2-2 3-3 2-5a4 4 0 0 1-2-5z" /></svg>
    <svg viewBox="0 0 28 28"><rect y="4" width="28" height="20" rx="2" /><path d="M4 9h20M4 14h20M4 19h3M9 19h10M21 19h3" stroke="#fff" stroke-width="3" stroke-dasharray="3 1.5" /></svg>
    <svg viewBox="0 0 28 28" class="dim"><circle cx="13" cy="8" r="6" /><path d="M2 25q0-10 11-10 9 0 10 10z" /><rect x="15" y="16" width="11" height="10" fill="#fff" stroke="#b4bfd6" stroke-width="2" /><path d="M20 19h2v5h-2z" /></svg>
    <svg viewBox="0 0 28 28"><path d="M2 7l8-4q4 4 8 0l8 4-3 7-3-1v12H8V13l-3 1z" /></svg>
    <svg viewBox="0 0 28 28"><path d="M2 22l11-10c-1-6 4-10 10-8l-5 5 2 4h7c0 5-6 8-11 6L7 27c-4 1-6-2-5-5z" /></svg>
  </div>
</main>

<style>
  :global(body) {
    background: #ebecf0;
  }

  .app {
    --line: #bcc5dc;
    --face: #ebecf0;
    position: relative;
    display: flex;
    flex-direction: column;
    min-height: 100vh;
    overflow: hidden;
    background: var(--face);
    color: #000;
    font: 23px/30px "Noto Sans", "Noto Sans CJK SC", sans-serif;
  }

  button,
  input,
  select {
    margin: 0;
    padding: 0;
    border: 0;
    border-radius: 0;
    background: none;
    color: inherit;
    font: inherit;
  }

  h1,
  h2,
  p {
    margin: 0;
    font-weight: normal;
  }

  .defs {
    position: absolute;
    width: 0;
    height: 0;
  }

  .titlebar {
    display: flex;
    align-items: center;
    height: 40px;
    padding-left: 3px;
    background: #fff;
    color: #999;
  }

  .logo {
    width: 28px;
    height: 28px;
    margin-right: 3px;
    overflow: visible;
  }

  h1 {
    font-size: 22px;
  }

  .window-buttons {
    display: flex;
    gap: 15px;
    margin-left: auto;
  }

  .window-buttons button {
    width: 66px;
    height: 38px;
  }

  .window-buttons svg {
    width: 16px;
    height: 16px;
    fill: none;
    stroke: #888;
  }

  .menu {
    display: flex;
    gap: 16px;
    height: 32px;
    padding-left: 7px;
    background: #fff;
    color: #666;
    font-size: 21px;
  }

  .command {
    padding: 5px 0 3px;
    border-bottom: 1px solid #dadce2;
    font-size: 21px;
  }

  .history,
  .prompt {
    display: flex;
    margin-left: 11px;
    background: #fff;
  }

  .history {
    height: 71px;
    border-bottom: 1px solid var(--line);
  }

  .lines {
    flex: 1;
    padding-left: 2px;
    line-height: 35px;
  }

  .scroll {
    display: flex;
    flex-direction: column;
    justify-content: space-between;
    width: 20px;
    padding: 10px 0;
    background: #f0f0f0;
    box-sizing: border-box;
  }

  .scroll svg {
    width: 14px;
    height: 10px;
    margin-left: 8px;
    fill: none;
    stroke: #555;
    stroke-width: 3;
  }

  .prompt {
    height: 31px;
  }

  .prompt label {
    padding-left: 2px;
    font-weight: bold;
    line-height: 28px;
  }

  .prompt input {
    flex: 1;
    outline: 0;
  }

  .spin {
    display: flex;
    flex-direction: column;
    gap: 1px;
    width: 19px;
  }

  .spin button {
    display: flex;
    align-items: center;
    height: 15px;
    padding-left: 8px;
    border: 1px solid #aaa;
    box-sizing: border-box;
    overflow: hidden;
  }

  .spin svg {
    flex: none;
    width: 10px;
    height: 6px;
  }

  .tabs {
    display: flex;
    height: 44px;
    padding: 4px 0 0 13px;
    border-bottom: 1px solid var(--line);
  }

  .tabs button {
    position: relative;
    height: 44px;
    padding: 0 30px 0 29px;
    white-space: nowrap;
  }

  .tabs span {
    position: relative;
    z-index: 1;
  }

  .tabs button::before,
  .tabs button::after {
    content: "";
    position: absolute;
    top: 0;
    bottom: 0;
    border-top: 1px solid var(--line);
    background: #d7d7d7;
  }

  .tabs button::before {
    left: -11px;
    width: 40px;
    border-left: 1px solid var(--line);
    transform: skewX(-40deg);
  }

  .tabs button::after {
    left: 18px;
    right: 0;
    border-right: 1px solid var(--line);
    border-radius: 0 6px 0 0;
  }

  .tabs button.active {
    z-index: 1;
    height: 45px;
  }

  .tabs .active::before,
  .tabs .active::after {
    background: var(--face);
  }

  .tabs .active::before {
    left: 3px;
    width: 20px;
    border-left: 0;
    transform: none;
  }

  .gear {
    width: 24px;
    margin: 0 -12px 4px auto;
  }

  .toolbar {
    display: flex;
    height: 53px;
    padding: 1px 0 0 12px;
    box-sizing: border-box;
    margin-bottom: 1px;
  }

  .tool {
    position: relative;
    display: grid;
    place-items: center;
    width: 42px;
    height: 42px;
  }

  .tool svg {
    width: 32px;
    height: 32px;
    overflow: visible;
  }

  .more::after {
    content: "";
    position: absolute;
    right: 2px;
    bottom: 2px;
    border: 5px solid;
    border-color: transparent #666 #666 transparent;
  }

  .workspace {
    display: flex;
    flex: 1;
  }

  .tools {
    flex: none;
    width: 94px;
    box-sizing: border-box;
    padding: 5px 8px 0 1px;
  }

  .grip {
    height: 2px;
    border: solid #d0d6e6;
    border-width: 1px 0;
  }

  .tool-grid {
    display: grid;
    grid-template-columns: 42px 42px;
  }

  .center {
    display: flex;
    flex: 1;
    flex-direction: column;
    min-width: 0;
  }

  .viewports {
    display: grid;
    flex: 1;
    grid-template: 1fr 1fr / 1fr 1fr;
    gap: 6px;
  }

  .viewport {
    position: relative;
    min-height: 320px;
    border: 1px solid var(--line);
    background: #9ca3ab;
    overflow: hidden;
  }

  .rendered {
    background: #fff;
  }

  .scene {
    position: absolute;
    width: 100%;
    height: 100%;
  }

  .axis {
    fill: none;
    stroke: #6b7178;
    stroke-width: 1.5;
  }

  .axis-name {
    fill: #5f656b;
    font-size: 23px;
  }

  h2 {
    position: relative;
    display: inline-flex;
    align-items: center;
    height: 33px;
    background: #c4c7cd;
    color: #50565c;
    font-size: 23px;
    font-weight: bold;
    border-radius: 0 0 6px 0;
  }

  h2.current {
    background: #8ca5c1;
    color: #000;
  }

  h2 span {
    padding: 0 10px 0 11px;
  }

  h2 button {
    width: 20px;
    height: 30px;
    border-left: 1px solid;
    font-size: 12px;
    line-height: 28px;
  }

  .view-tabs {
    display: flex;
    gap: 1px;
    height: 38px;
    padding: 2px 0 12px;
  }

  .view-tabs button {
    padding: 0 10px 0 21px;
    border-right: 1px solid var(--line);
    border-bottom: 1px solid var(--line);
    border-radius: 0 0 4px 0;
    background: linear-gradient(65deg, var(--face) 15px, var(--line) 15px 16px, #d7d7d7 16px);
  }

  .view-tabs .active {
    background: linear-gradient(65deg, var(--face) 15px, var(--line) 15px 16px, var(--face) 16px);
  }

  .view-tabs .add {
    padding: 0 16px 0 23px;
  }

  .add svg {
    display: block;
    width: 17px;
    height: 17px;
    fill: #fff;
    stroke: #888;
  }

  .panel {
    display: flex;
    flex: none;
    flex-direction: column;
    width: 450px;
    box-sizing: border-box;
    margin-left: 9px;
    padding: 5px 0 12px;
  }

  .panel-tabs {
    display: flex;
    height: 44px;
    padding-top: 5px;
    border-top: 1px solid var(--line);
    overflow: hidden;
  }

  .panel-tabs button {
    display: flex;
    flex: none;
    align-items: center;
    gap: 5px;
    width: 71px;
    padding-left: 5px;
    box-sizing: border-box;
    border: 1px solid var(--line);
    border-width: 1px 0 1px 1px;
    border-radius: 4px 0 0 0;
    background: linear-gradient(220deg, var(--face) 18px, var(--line) 18px 19px, #d7d7d7 19px);
    font-size: 21px;
  }

  .panel-tabs .active {
    border-bottom: 0;
    background: var(--face);
  }

  .panel-tabs button svg {
    flex: none;
    width: 26px;
    height: 26px;
    overflow: visible;
  }

  .panel-gear {
    flex: none;
    width: 24px;
    margin-top: 10px;
    margin-left: 6px;
  }

  .panel-body {
    flex: 1;
    border: solid var(--line);
    border-width: 0 0 1px 1px;
    background: #f6f7fa;
  }

  .modes {
    display: flex;
    gap: 4px;
    padding: 5px 4px 4px;
  }

  .modes button {
    display: grid;
    place-items: center;
    width: 44px;
    height: 44px;
    border: 1px solid #adadad;
    background: #e1e1e1;
  }

  .modes .active {
    border: 2px solid #1d5a9c;
    background: #b4d2ec;
  }

  .modes svg {
    width: 36px;
    height: 36px;
    overflow: visible;
  }

  table {
    width: calc(100% - 4px);
    margin-left: 3px;
    border-collapse: collapse;
    table-layout: fixed;
  }

  col.indent {
    width: 28px;
  }

  col.name {
    width: 195px;
  }

  th {
    height: 45px;
    box-sizing: border-box;
    padding: 3px 3px 0;
    border: 1px solid #e9eaee;
    font-size: 27px;
    font-weight: normal;
    text-align: left;
  }

  td {
    height: 36px;
    box-sizing: border-box;
    padding: 0;
    border: 1px solid #e9eaee;
    background: #fff;
    white-space: nowrap;
  }

  td.indent {
    border-right: 0;
    background: #f6f7fa;
  }

  td.name {
    padding-left: 5px;
    border-left: 0;
  }

  .value input[type="text"] {
    display: block;
    width: 100%;
    height: 34px;
    box-sizing: border-box;
    padding-left: 5px;
  }

  .value.file input[type="text"] {
    padding-left: 3px;
  }

  .value.readonly {
    background: #ebecf0;
  }

  .value.button button {
    display: block;
    width: calc(100% - 1px);
    height: 34px;
    margin-left: 1px;
    border: 1px solid #adadad;
    background: #e1e1e1;
    line-height: 28px;
  }

  .field {
    position: relative;
    display: flex;
    height: 34px;
  }

  .field select {
    flex: 1;
    padding-left: 3px;
    appearance: none;
    background:
      linear-gradient(#e1e1e1, #e1e1e1) right / 34px 100% no-repeat,
      linear-gradient(#adadad, #adadad) right / 35px 100% no-repeat;
  }

  .field svg {
    position: absolute;
    right: 12px;
    top: 14px;
    width: 12px;
    height: 8px;
    fill: none;
    stroke: #444;
    pointer-events: none;
  }

  .field button {
    flex: none;
    width: 34px;
    border: 1px solid #adadad;
    background: #e1e1e1;
    line-height: 28px;
  }

  input[type="checkbox"] {
    position: relative;
    flex: none;
    width: 20px;
    height: 20px;
    box-sizing: border-box;
    border: 2px solid #333;
    background: #fff;
    appearance: none;
  }

  input[type="checkbox"]:checked::after {
    content: "";
    position: absolute;
    left: 2px;
    top: 2px;
    width: 11px;
    height: 5px;
    border: solid #333;
    border-width: 0 0 2px 2px;
    transform: rotate(-45deg);
  }

  input[type="checkbox"]:disabled {
    border: 1px solid #aaa;
    background: #e0e0e0;
  }

  .check input {
    display: block;
    margin-left: 4px;
  }

  .osnap {
    display: flex;
    gap: 14px;
    height: 38px;
    margin-left: 8px;
    padding-left: 8px;
    border-left: 1px solid var(--line);
  }

  .osnap label {
    display: flex;
    align-items: center;
    gap: 4px;
    height: 36px;
  }

  .osnap .apart {
    margin-left: 24px;
  }

  .status {
    display: flex;
    height: 27px;
    border-top: 1px solid var(--line);
    font-size: 21px;
    line-height: 27px;
    white-space: nowrap;
  }

  .cell {
    box-sizing: border-box;
    padding: 0 9px;
    border-right: 1px solid var(--line);
  }

  .plane {
    width: 102px;
  }

  .coord {
    width: 148px;
    text-align: center;
  }

  .layer {
    display: flex;
    align-items: center;
    gap: 4px;
    width: 288px;
    padding: 0 5px;
  }

  .layer i {
    width: 14px;
    height: 14px;
    border: 2px solid #000;
    background: #7e22ce;
  }

  .on {
    background: #e2f1fc;
    font-weight: bold;
  }

  .cpu {
    padding-left: 2px;
  }

  .taskbar {
    height: 4px;
    background: #1c1c1e;
  }

  .ime {
    position: absolute;
    right: 0;
    bottom: 4px;
    display: flex;
    align-items: center;
    gap: 10px;
    height: 42px;
    padding-right: 2px;
    border-top: 1px solid #c6d3e0;
    background: #fff;
    color: #2176cc;
  }

  .ime svg {
    width: 28px;
    height: 28px;
    fill: currentColor;
  }

  .ime .sogou {
    width: 50px;
    height: 48px;
    margin-left: -40px;
    overflow: visible;
  }

  .ime b {
    font-size: 28px;
  }

  .ime .dim {
    color: #b4bfd6;
  }
</style>
